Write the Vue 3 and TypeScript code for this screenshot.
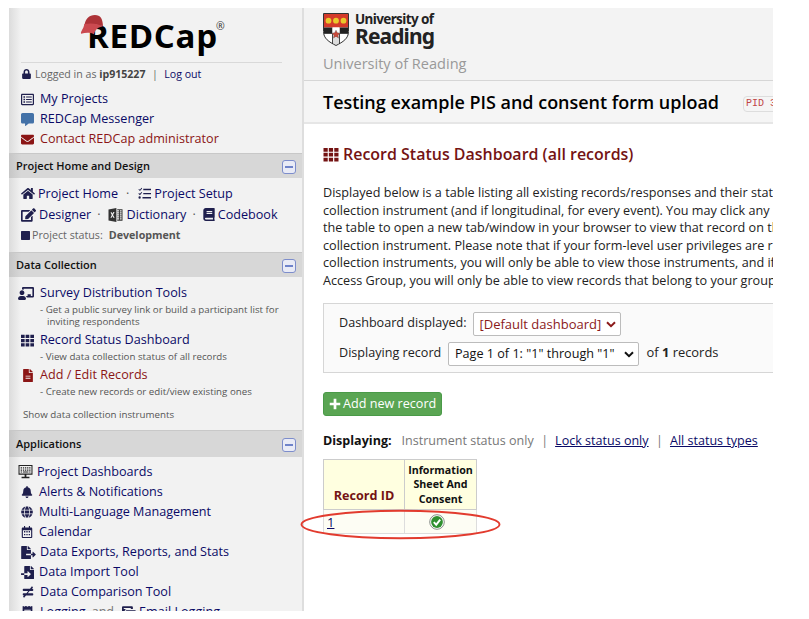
<script setup lang="ts">
interface Icon { box: string; d: string }

const icons: Record<string, Icon> = {
  lock: { box: '0 0 448 512', d: 'M400 224h-24v-72C376 68 308 0 224 0S72 68 72 152v72H48c-27 0-48 21-48 48v192c0 27 21 48 48 48h352c27 0 48-21 48-48V272c0-27-21-48-48-48zm-104 0H152v-72c0-40 32-72 72-72s72 32 72 72v72z' },
  list: { box: '0 0 512 512', d: 'M464 32H48C21 32 0 53 0 80v352c0 27 21 48 48 48h416c27 0 48-21 48-48V80c0-27-21-48-48-48zm-6 400H54c-3 0-6-3-6-6V86c0-3 3-6 6-6h404c3 0 6 3 6 6v340c0 3-3 6-6 6zM200 134h224v44H200zM200 234h224v44H200zM200 334h224v44H200zM96 126h64v60H96zM96 226h64v60H96zM96 326h64v60H96z' },
  chat: { box: '0 0 512 512', d: 'M448 0H64C29 0 0 29 0 64v288c0 35 29 64 64 64h96v84c0 10 11 15 19 10l125-94h144c35 0 64-29 64-64V64c0-35-29-64-64-64z' },
  mail: { box: '0 0 512 512', d: 'M502 191c4-3 10 0 10 5v204c0 27-21 48-48 48H48c-27 0-48-21-48-48V196c0-5 6-8 10-5 22 17 52 40 154 114 21 15 57 48 92 47 35 1 72-32 92-47 102-74 132-97 154-114zM256 320c23 0 57-29 73-41 133-96 143-105 174-129 6-5 9-12 9-19v-19c0-27-21-48-48-48H48c-27 0-48 21-48 48v19c0 7 3 14 9 19 31 24 41 33 174 129 16 12 50 41 73 41z' },
  home: { box: '0 0 576 512', d: 'M280 148 96 300v164c0 9 7 16 16 16h112c9 0 16-7 16-16v-95c0-9 7-16 16-16h64c9 0 16 7 16 16v95c0 9 7 16 16 16h112c9 0 16-7 16-16V300L296 148c-5-4-11-4-16 0zM572 251l-84-69V44c0-7-5-12-12-12h-56c-7 0-12 5-12 12v73l-90-74c-17-14-43-14-60 0L4 251c-5 4-5 12-1 17l26 31c4 5 12 6 17 2L280 107c5-4 11-4 16 0l234 194c5 4 13 3 17-2l26-31c4-5 4-13-1-17z' },
  tasks: { box: '0 0 512 512', d: 'M139 34 75 106 40 74 15 101l62 60 88-102zM139 196l-64 72-35-32-25 27 62 60 88-102zM64 368a46 46 0 1 0 0 92 46 46 0 0 0 0-92zM208 72h304v56H208zM208 232h304v56H208zM176 392h336v56H176z' },
  edit: { box: '0 0 576 512', d: 'M403 83l90 90c4 4 4 10 0 14L274 406l-93 10c-12 2-23-9-21-21l10-93L389 83c4-4 10-4 14 0zm162-23l-49-49c-15-15-40-15-55 0l-35 35c-4 4-4 10 0 14l90 90c4 4 10 4 14 0l35-35c15-15 15-40 0-55zM384 346v102H64V128h230c3 0 6-1 9-4l40-40c7-7 2-20-9-20H48c-27 0-48 21-48 48v352c0 27 21 48 48 48h352c27 0 48-21 48-48V306c0-11-13-16-20-9l-40 40c-3 3-4 6-4 9z' },
  excel: { box: '0 0 16 16', d: 'M0 1.8 9 0v16l-9-1.8zM2.3 5l1.5 3-1.6 3h1.4l.9-2 1 2.1H7L5.200 8 6.900 4.700H5.500l-.9 2L3.700 4.900zM10 1.500h6v13h-6v-1.300h2V11.700h-2V10.800h2V9.400h-2V8.500h2V7.100h-2V6.200h2V4.800h-2V3.900h2V2.600h-2zM13 2.600v1.300h2V2.600zM13 4.800v1.400h2V4.800zM13 7.100v1.400h2V7.100zM13 9.400v1.400h2V9.400zM13 11.700v1.400h2v-1.400z' },
  book: { box: '0 0 448 512', d: 'M448 360V24c0-13-11-24-24-24H96C43 0 0 43 0 96v320c0 53 43 96 96 96h328c13 0 24-11 24-24v-16c0-8-4-14-9-19-4-15-4-59 0-74 5-4 9-11 9-19zM128 120h224v44H128zM128 192h224v44H128zM381 448H96c-18 0-32-14-32-32s14-32 32-32h285c-2 17-2 47 0 64z' },
  square: { box: '0 0 16 16', d: 'M1 0h14l1 1v14l-1 1H1l-1-1V1z' },
  teacher: { box: '0 0 640 512', d: 'M208 352c-2 0-5 0-7 1-13 4-27 7-41 7s-28-3-41-7c-2-1-4-1-7-1C50 352 0 402 0 464c0 27 22 48 48 48h224c26 0 48-21 48-48 0-62-50-112-112-112zm-48-32c53 0 96-43 96-96s-43-96-96-96-96 43-96 96 43 96 96 96zM592 0H208c-26 0-48 22-48 49v47c24 0 45 7 64 18V64h352v288h-64v-64H384v64h-76c24 16 42 38 50 64h234c26 0 48-22 48-49V49c0-27-22-49-48-49z' },
  grid: { box: '0 0 16 16', d: 'M0 1h4.500v4H0zM5.700 1h4.500v4H5.700zM11.500 1H16v4h-4.500zM0 6.200h4.500v4H0zM5.700 6.200h4.500v4H5.700zM11.500 6.200H16v4h-4.500zM0 11.400h4.500v4H0zM5.700 11.400h4.500v4H5.700zM11.500 11.400H16v4h-4.500z' },
  file: { box: '0 0 384 512', d: 'M224 136V0H24C11 0 0 11 0 24v464c0 13 11 24 24 24h336c13 0 24-11 24-24V160H248c-13 0-24-11-24-24zm64 248H96v-36h192zm0-84H96v-36h192zM384 122v6H256V0h6c7 0 13 3 17 7l98 98c4 4 7 10 7 17z' },
  board: { box: '0 0 16 16', d: 'M0 0h16v11H9v2.500h3.500V15h-9v-1.500H7V11H0zM1.200 1.200v8.600h13.600V1.200zM2.500 2.500H4V4H2.500zM5 2.500h1.500V4H5zM7.400 2.500h1.500V4H7.400zM9.800 2.500h1.500V4H9.800zM12.200 2.500h1.500V4h-1.500zM2.500 5H4v1.500H2.500zM5 5h1.500v1.500H5zM7.400 5h1.500v1.500H7.400zM9.800 5h1.500v1.500H9.800zM12.200 5h1.500v1.500h-1.500zM2.500 7.500H4v1.200H2.500zM5 7.500h6.300v1.200H5zM12.200 7.500h1.500v1.200h-1.500z' },
  bell: { box: '0 0 448 512', d: 'M224 512c35 0 64-29 64-64H160c0 35 29 64 64 64zm215-150c-19-20-55-51-55-154 0-77-54-139-128-154V32a32 32 0 0 0-64 0v22C118 69 64 131 64 208c0 103-36 134-55 154-6 6-9 14-9 22 0 16 13 32 32 32h384c19 0 32-16 32-32 0-8-3-16-9-22z' },
  globe: { box: '0 0 496 512', d: 'M336 160C322 71 288 8 248 8s-74 63-88 152zm-184 96c0 22 1 44 3 64h186c2-20 3-42 3-64s-1-44-3-64H155c-2 20-3 42-3 64zm325-96C448 90 388 36 315 16c25 34 42 86 51 144zM181 16C108 36 48 90 19 160h111c9-58 26-110 51-144zm306 176H373a652 652 0 0 1 0 128h114c6-20 9-42 9-64s-3-44-9-64zM120 256c0-22 1-43 3-64H9c-6 20-9 42-9 64s3 44 9 64h114c-2-21-3-42-3-64zm40 96c14 89 48 152 88 152s74-63 88-152zm155 144c73-20 133-74 162-144H366c-9 58-26 110-51 144zM19 352c29 70 89 124 162 144-25-34-42-86-51-144z' },
  calendar: { box: '0 0 448 512', d: 'M400 64h-48V12c0-7-5-12-12-12h-24c-7 0-12 5-12 12v52H144V12c0-7-5-12-12-12h-24c-7 0-12 5-12 12v52H48c-27 0-48 21-48 48v352c0 27 21 48 48 48h352c27 0 48-21 48-48V112c0-27-21-48-48-48zm0 400H48V176h352zM96 216h56v56H96zM196 216h56v56h-56zM296 216h56v56h-56zM96 336h56v56H96zM196 336h56v56h-56zM296 336h56v56h-56z' },
  fileout: { box: '0 0 576 512', d: 'M384 122c0-7-3-13-7-17L279 7c-4-4-10-7-17-7h-6v128h128zm187 206-96-96c-11-11-27-2-27 11v61h-64v64h64v64c0 14 17 22 27 11l96-96c6-6 6-14 0-19zM192 352v-32c0-9 7-16 16-16h176V160H248c-13 0-24-11-24-24V0H24C11 0 0 11 0 24v464c0 13 11 24 24 24h336c13 0 24-11 24-24V368H208c-9 0-16-7-16-16z' },
  filein: { box: '0 0 512 512', d: 'M16 288c-9 0-16 7-16 16v32c0 9 7 16 16 16h112v-64zm489-183L407 7c-4-4-10-7-17-7h-6v128h128v-6c0-7-3-13-7-17zm-153 31V0H152c-13 0-24 11-24 24v264h128v-65c0-14 17-22 27-11l96 96c7 7 7 17 0 24l-96 96c-10 11-27 2-27-11v-65H128v136c0 13 11 24 24 24h336c13 0 24-11 24-24V160H376c-13 0-24-11-24-24z' },
  unequal: { box: '0 0 448 512', d: 'M416 208c18 0 32-14 32-32v-32c0-18-14-32-32-32h-24l48-60-50-40-80 100H32c-18 0-32 14-32 32v32c0 18 14 32 32 32h201l-77 96H32c-18 0-32 14-32 32v32c0 18 14 32 32 32h24L8 460l50 40 80-100h278c18 0 32-14 32-32v-32c0-18-14-32-32-32H215l77-96z' },
  receipt: { box: '0 0 384 512', d: 'M358 3l-38 29-56-29c-5-3-11-3-16 0l-56 29-56-29c-5-3-11-3-16 0L64 32 26 3C15-5 0 3 0 16v480c0 13 15 21 26 13l38-29 56 29c5 4 11 4 16 0l56-29 56 29c5 4 11 4 16 0l56-29 38 29c11 8 26 0 26-13V16c0-13-15-21-26-13zM320 360H64v-40h256zm0-88H64v-40h256zm0-88H64v-40h256z' },
  mails: { box: '0 0 576 512', d: 'M0 48C0 21 21 0 48 0h352c27 0 48 21 48 48v64H192c-44 0-80 36-80 80v192H48c-27 0-48-21-48-48zM72 70v42h290V70zM144 208c0-27 21-48 48-48h336c27 0 48 21 48 48v20L360 340 144 228zM144 276l216 112 216-112v188c0 27-21 48-48 48H192c-27 0-48-21-48-48z' },
  plus: { box: '0 0 16 16', d: 'M6.200 1h3.600v5.200H15v3.600H9.800V15H6.200V9.800H1V6.200h5.200z' },
}

interface Link { icon: string; label: string; mod: string; tone?: string; notes?: string[] }

const account: Link[] = [
  { icon: 'list', label: 'My Projects', mod: 'projects' },
  { icon: 'chat', label: 'REDCap Messenger', mod: 'messenger' },
  { icon: 'mail', label: 'Contact REDCap administrator', mod: 'contact', tone: 'red' },
]
const collection: Link[] = [
  { icon: 'teacher', label: 'Survey Distribution Tools', mod: 'survey', notes: ['- Get a public survey link or build a participant list for', 'inviting respondents'] },
  { icon: 'grid', label: 'Record Status Dashboard', mod: 'status', notes: ['- View data collection status of all records'] },
  { icon: 'file', label: 'Add / Edit Records', mod: 'records', tone: 'red', notes: ['- Create new records or edit/view existing ones'] },
]
const applications: Link[] = [
  { icon: 'board', label: 'Project Dashboards', mod: 'boards' },
  { icon: 'bell', label: 'Alerts & Notifications', mod: 'alerts' },
  { icon: 'globe', label: 'Multi-Language Management', mod: 'language' },
  { icon: 'calendar', label: 'Calendar', mod: 'calendar' },
  { icon: 'fileout', label: 'Data Exports, Reports, and Stats', mod: 'exports' },
  { icon: 'filein', label: 'Data Import Tool', mod: 'import' },
  { icon: 'unequal', label: 'Data Comparison Tool', mod: 'compare' },
]
const intro: string[] = [
  'Displayed below is a table listing all existing records/responses and their stat',
  'collection instrument (and if longitudinal, for every event). You may click any',
  'the table to open a new tab/window in your browser to view that record on th',
  'collection instrument. Please note that if your form-level user privileges are r',
  'collection instruments, you will only be able to view those instruments, and if',
  'Access Group, you will only be able to view records that belong to your group',
]
</script>

<template>
  <div class="page">
    <aside class="side">
      <div class="brand">
        <svg class="cap" viewBox="0 0 26 24"><path d="M4 11C5 4 9 0 15 0c6 0 8 4 8.500 11.500L15 10z" fill="#ad3338" /><path d="M4 9.500c7-1.500 14-.5 19.500 2.500-5 .5-8 3-9.500 8-4-2-8-2-13.500-.5C0 17 3 15 4 9.500z" fill="#cb4a50" /></svg>
        <span class="word">REDCap</span><span class="reg">®</span>
      </div>
      <div class="login">
        <svg class="i-lock" :viewBox="icons.lock.box"><path :d="icons.lock.d" /></svg>
        <span>Logged in as <b>ip915227</b></span><span class="bar">|</span><a>Log out</a>
      </div>
      <nav class="account">
        <div v-for="l in account" :key="l.mod" class="row" :class="[l.mod, l.tone]">
          <span class="ic"><svg :viewBox="icons[l.icon].box"><path fill-rule="evenodd" :d="icons[l.icon].d" /></svg></span><a>{{ l.label }}</a>
        </div>
      </nav>

      <header class="band"><span>Project Home and Design</span><i class="fold"></i></header>
      <div class="design">
        <div class="line l1">
          <svg class="i-home" :viewBox="icons.home.box"><path :d="icons.home.d" /></svg><a>Project Home</a><span class="dot">·</span>
          <svg class="i-tasks" :viewBox="icons.tasks.box"><path :d="icons.tasks.d" /></svg><a>Project Setup</a>
        </div>
        <div class="line l2">
          <svg class="i-edit" :viewBox="icons.edit.box"><path :d="icons.edit.d" /></svg><a>Designer</a><span class="dot">·</span>
          <svg class="i-excel" :viewBox="icons.excel.box"><path fill-rule="evenodd" :d="icons.excel.d" /></svg><a>Dictionary</a><span class="dot">·</span>
          <svg class="i-book" :viewBox="icons.book.box"><path fill-rule="evenodd" :d="icons.book.d" /></svg><a>Codebook</a>
        </div>
        <div class="line l3">
          <svg class="i-square" :viewBox="icons.square.box"><path :d="icons.square.d" /></svg><span class="st">Project status:</span><b>Development</b>
        </div>
      </div>

      <header class="band"><span>Data Collection</span><i class="fold"></i></header>
      <nav class="collection">
        <div v-for="l in collection" :key="l.mod" class="block" :class="'b-' + l.mod">
          <div class="row" :class="[l.mod, l.tone]">
            <span class="ic"><svg :viewBox="icons[l.icon].box"><path fill-rule="evenodd" :d="icons[l.icon].d" /></svg></span><a>{{ l.label }}</a>
          </div>
          <p v-for="n in l.notes" :key="n" class="note">{{ n }}</p>
        </div>
        <p class="show">Show data collection instruments</p>
      </nav>

      <header class="band apps"><span>Applications</span><i class="fold"></i></header>
      <nav class="applications">
        <div v-for="l in applications" :key="l.mod" class="row" :class="l.mod">
          <span class="ic"><svg :viewBox="icons[l.icon].box"><path fill-rule="evenodd" :d="icons[l.icon].d" /></svg></span><a>{{ l.label }}</a>
        </div>
        <div class="row logging">
          <span class="ic"><svg :viewBox="icons.receipt.box"><path fill-rule="evenodd" :d="icons.receipt.d" /></svg></span><a>Logging</a><span class="and">and</span>
          <svg class="i-mails" :viewBox="icons.mails.box"><path fill-rule="evenodd" :d="icons.mails.d" /></svg><a>Email Logging</a>
        </div>
      </nav>
    </aside>

    <main class="main">
      <header class="org">
        <div class="uni">
          <svg class="shield" viewBox="0 0 26 33">
            <path d="M.5.500h25v18c0 7-5.500 10.500-12.500 14C6 29 .5 25.500.5 18.500z" fill="#fff" />
            <path d="M1 1h24v13.500H1z" fill="#d43a2a" />
            <path d="M1 14.500h8.500V20H1zM16.500 14.500H25V20h-8.500z" fill="#222" />
            <path d="M9.500 14.500h7v10h-7z" fill="#fff" />
            <path d="M9.500 25h7v5.500L13 32l-3.500-1.500z" fill="#ddd" />
            <circle cx="5.500" cy="7.700" r="2.900" fill="#e9c92c" /><circle cx="13" cy="7.700" r="2.900" fill="#e9c92c" /><circle cx="20.500" cy="7.700" r="2.900" fill="#e9c92c" />
            <path d="M1 20.500h8.500V31M25 20.500h-8.500V31" fill="none" stroke="#333" stroke-width=".9" />
            <path d="M13 17.200l1.300 2.600 2.900.4-2.100 2 .5 2.900-2.600-1.400-2.600 1.400.5-2.900-2.100-2 2.900-.4z" fill="#c94a3b" stroke="#555" stroke-width=".4" />
            <path d="M.5.500h25v18c0 7-5.500 10.500-12.500 14C6 29 .5 25.500.5 18.500z" fill="none" stroke="#333" />
          </svg>
          <div class="uniname"><span class="u1">University of</span><span class="u2">Reading</span></div>
        </div>
        <div class="orgname">University of Reading</div>
      </header>
      <div class="title"><h1>Testing example PIS and consent form upload</h1><span class="pid">PID 3</span></div>

      <div class="content">
        <h2><svg :viewBox="icons.grid.box"><path :d="icons.grid.d" /></svg><span>Record Status Dashboard (all records)</span></h2>
        <div class="intro"><div v-for="t in intro" :key="t">{{ t }}</div></div>

        <div class="filter">
          <div class="frow"><span class="f1">Dashboard displayed:</span>
            <span class="select red s1"><span>[Default dashboard]</span><svg viewBox="0 0 10 7"><path d="M1 1.300l4 3.900 4-3.900" /></svg></span></div>
          <div class="frow"><span class="f2">Displaying record</span>
            <span class="select s2"><span>Page 1 of 1: "1" through "1"</span><svg viewBox="0 0 10 7"><path d="M1 1.300l4 3.900 4-3.900" /></svg></span>
            <span class="f3">of <b>1</b> records</span></div>
        </div>

        <button class="add"><svg :viewBox="icons.plus.box"><path :d="icons.plus.d" /></svg><span>Add new record</span></button>

        <div class="modes"><b>Displaying:</b><span class="cur">Instrument status only</span><i>|</i><a>Lock status only</a><i>|</i><a>All status types</a></div>

        <div class="tablewrap">
          <table>
            <thead><tr><th class="rid">Record ID</th><th class="ins">Information<br />Sheet And<br />Consent</th></tr></thead>
            <tbody><tr><td class="one"><a>1</a></td><td class="ok">
              <svg viewBox="0 0 16 16"><circle cx="8" cy="8" r="7.300" fill="#fff" stroke="#8a8f8a" /><circle cx="8" cy="8" r="5.900" fill="#2f8f2f" /><path d="M4.800 8.200l2.400 2.500 4-5" fill="none" stroke="#fff" stroke-width="1.900" /></svg>
            </td></tr></tbody>
          </table>
          <svg class="ring" viewBox="0 0 202 32"><ellipse cx="100.500" cy="15.500" rx="99" ry="13.700" /></svg>
        </div>
      </div>
    </main>
  </div>
</template>

<style>
body { margin: 0; background: #fff; }
</style>

<style scoped>
* { box-sizing: border-box; }
.page { width: 764px; height: 603px; margin: 8px 0 0 9px; display: flex; overflow: clip; font-family: "Open Sans", sans-serif; font-size: 12.620px; line-height: 18px; color: #222; white-space: nowrap; }
p, h1, h2 { margin: 0; }
svg { flex: none; display: block; fill: currentColor; }
a { color: #0a0a66; }
.side { width: 295px; height: 603px; flex: none; overflow: hidden; border-right: 2px solid #dedede; color: #1f1f4d; background: linear-gradient(90deg, #dcdcdc, #f2f2f2 12px); }
.brand { height: 55px; margin: 0 20px 0 12px; border-bottom: 1px solid #d9d9d9; position: relative; }
.cap { position: absolute; left: 59px; top: 7px; width: 26px; height: 23px; z-index: 1; }
.word { position: absolute; left: 66px; top: 4px; font: 700 33px/48px "Open Sans", sans-serif; letter-spacing: 0.700px; color: #000; }
.reg { position: absolute; left: 195px; top: 10px; font-size: 10.500px; line-height: 16px; color: #333; }
.login { display: flex; align-items: center; height: 22px; padding-left: 13px; font-size: 10.600px; color: #666; }
.login b { color: #444; }
.i-lock { width: 9px; height: 10px; margin-right: 4px; color: #1f1f4d; }
.bar { margin: 0 6.500px; }
.account { height: 68px; padding-top: 4px; }
.row { display: flex; align-items: center; height: 20px; padding-left: 12px; }
.ic { width: 19px; display: flex; flex: none; }
.ic svg { width: 13px; height: 13px; }
.messenger .ic { color: #4472a8; }
.red, .red a { color: #8b1515; }
.band { height: 25px; padding: 0 6px 0 7px; display: flex; align-items: center; justify-content: space-between; border-top: 1px solid #c8c8c8; background: linear-gradient(90deg, #c6c6c6, #d7d7d7 12px); font-size: 11px; font-weight: 600; color: #111; }
.fold { width: 14px; height: 14px; margin-top: 1px; border: 1px solid #7d8dcb; border-radius: 3px; background: #e9ebf6; display: flex; align-items: center; justify-content: center; }
.fold::after { content: ""; width: 8px; height: 2px; background: #6f83c9; }
.design { height: 74px; padding: 5px 0 0 12px; }
.line { display: flex; align-items: center; height: 21px; color: #1f1f4d; }
.line .dot { color: #555; }
.i-home { width: 14px; height: 13px; margin-right: 3px; }
.l1 .dot { margin: 0 9px 0 8px; }
.i-tasks { width: 13px; height: 13px; margin-right: 3px; }
.i-edit { width: 15px; height: 14px; margin-right: 3px; }
.l2 .dot { margin: 0 7px 0 6px; }
.i-excel { width: 15px; height: 14px; margin-right: 4px; color: #333; }
.i-book { width: 12px; height: 13px; margin-right: 3px; }
.l3 { font-size: 10.700px; color: #666; height: 20px; }
.l3 b { color: #555; font-weight: 700; }
.st { margin-right: 6px; }
.i-square { width: 9px; height: 9px; margin-right: 2px; color: #1f1f4d; }
.collection { height: 153px; padding-top: 6px; }
.note { font-size: 9.720px; line-height: 12px; padding-left: 31px; color: #555; position: relative; top: 0.500px; }
.note + .note { padding-left: 38px; }
.survey { padding-left: 9px; }
.survey .ic { width: 22px; }
.survey .ic svg { width: 16px; }
.b-survey { height: 47px; }
.b-status, .b-records { height: 35px; }
.records .ic { padding-left: 2px; }
.records .ic svg { width: 10px; }
.show { padding: 8px 0 0 14px; font-size: 9.750px; line-height: 14px; color: #555; }
.band.apps { height: 27px; }
.applications { padding-top: 5px; }
.boards { padding-left: 9px; }
.boards .ic svg { width: 15px; height: 14px; color: #222; }
.alerts .ic svg, .language .ic svg, .calendar .ic svg { width: 12px; height: 12px; }
.alerts .ic, .language .ic, .calendar .ic, .import .ic { width: 18px; }
.exports .ic svg { width: 15px; }
.compare .ic svg { width: 12px; height: 12px; margin-left: 1px; }
.logging .ic svg { width: 11px; margin-left: 1px; }
.and { color: #777; margin: 0 8px 0 6px; }
.i-mails { width: 14px; height: 13px; margin-right: 3px; }

.main { flex: 1; min-width: 0; height: 603px; }
.org { height: 73px; padding: 5px 0 0 19px; background: #f3f3f3; border-bottom: 1px solid #d6d6d6; }
.uni { display: flex; height: 39px; }
.shield { width: 26px; height: 33px; }
.uniname { display: flex; flex-direction: column; padding-left: 6px; color: #222; }
.u1 { font: 700 13.500px/13px "Noto Sans", sans-serif; letter-spacing: -0.620px; }
.u2 { font: 700 21px/21px "Noto Sans", sans-serif; letter-spacing: -0.900px; }
.orgname { font-size: 14.550px; line-height: 22px; color: #999; }
.title { height: 43px; padding-left: 19px; display: flex; align-items: center; background: #f5f5f5; border-bottom: 2px solid #e6e6e6; }
h1 { font-size: 17.980px; line-height: 24px; font-weight: 600; color: #000; }
.pid { margin: 4px 0 0 24px; height: 16px; width: 60px; flex: none; border: 1px solid #ddd; border-radius: 4px; padding: 0 2px; font: 10px/14px "Liberation Mono", monospace; color: #c04545; }
.content { padding: 19px 0 0 19px; }
h2 { display: flex; align-items: center; height: 22px; font-size: 15.980px; font-weight: 600; color: #741313; }
h2 svg { width: 16px; height: 15px; margin-right: 4px; }
.intro { margin-top: 19px; font-size: 12.640px; line-height: 17.500px; height: 119px; }
.filter { height: 70px; border: 1px solid #d6d6d6; border-right: 0; background: #fafafa; padding: 8px 0 0 15px; }
.frow { display: flex; height: 30px; }
.f1, .f2 { line-height: 21px; }
.f1 { width: 134px; }
.f2 { width: 109px; }
.f3 { line-height: 20px; margin-left: 7.500px; font-size: 12.900px; }
.select { display: flex; align-items: center; justify-content: space-between; height: 24px; border: 1px solid #bcbcbc; border-radius: 2px; background: #fff; padding: 0 4px 0 6px; color: #111; }
.select.red { color: #8b1a1a; font-size: 13px; }
.select svg { width: 10px; height: 7px; fill: none; stroke: currentColor; stroke-width: 2; }
.s1 { width: 148px; padding-left: 5.500px; }
.s2 { width: 191px; }
.add { margin: 19px 0 0; width: 119px; height: 24px; display: flex; align-items: center; border: 1px solid #4a9a48; border-radius: 3px; background: #5aa553; color: #fff; padding: 0 5px; font: 12.620px/18px "Open Sans", sans-serif; }
.add svg { width: 12px; height: 12px; margin-right: 2px; }
.modes { display: flex; align-items: center; height: 20px; margin-top: 15px; font-size: 12.560px; color: #777; }
.modes b { color: #111; margin-right: 10px; }
.modes i { font-style: normal; margin: 0 7px 0 7.500px; }
.modes a { text-decoration: underline; }
.tablewrap { position: relative; width: 154px; margin-top: 8px; }
table { border-collapse: collapse; table-layout: fixed; width: 154px; }
th { background: #ffffe0; border: 1px solid #ccc; height: 50px; padding: 0; vertical-align: bottom; font-size: 10.700px; line-height: 14.500px; color: #111; }
.rid { width: 81px; font-size: 12.600px; line-height: 18px; padding-bottom: 4px; color: #741313; }
.ins { padding-bottom: 3px; }
td { height: 24px; padding: 0; border: 1px solid #ddd; background: #fdfdf4; }
.one { padding: 1px 0 0 3px; font-size: 13px; }
.one a { text-decoration: underline; }
.ok svg { width: 16px; height: 16px; margin: 1px auto 0; position: relative; left: -4px; }
.ring { position: absolute; left: -23px; top: 50px; width: 202px; height: 32px; fill: none; stroke: #e23b2e; stroke-width: 1.900; }
</style>
